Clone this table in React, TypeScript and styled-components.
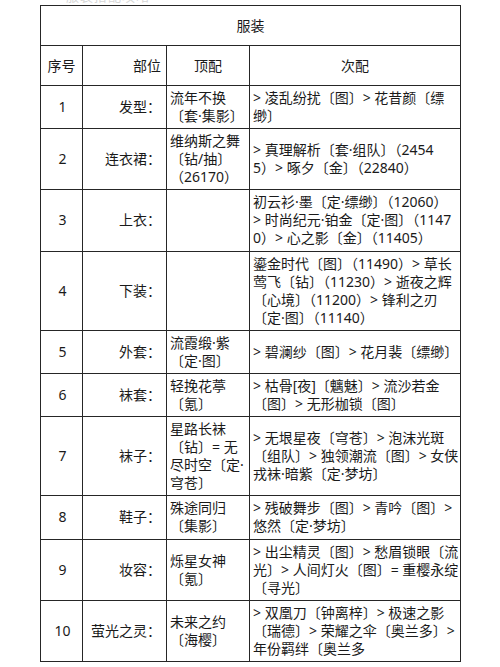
import React from "react";
import styled, { createGlobalStyle } from "styled-components";

const Global = createGlobalStyle`
  html, body { margin: 0; padding: 0; background: #ffffff; }
  body { font-family: "Noto Sans", "Noto Sans CJK SC", sans-serif; color: #1a1a1a; }
`;

const Page = styled.div`
  width: 500px;
  height: 667px;
  overflow: hidden;
  background: #fff;
`;

const TopStrip = styled.div`
  height: 5px;
  overflow: hidden;
  padding-left: 66px;
`;

const Faint = styled.div`
  margin-top: -11px;
  font-size: 13px;
  line-height: 14px;
  color: #d6d6d6;
  letter-spacing: 1px;
`;

const Table = styled.table`
  margin-left: 40px;
  border-collapse: collapse;
  table-layout: fixed;
  width: 420px;
  font-size: 14px;
  line-height: 18px;
  color: #1a1a1a;
`;

const TitleCell = styled.th`
  height: 39px;
  border: 1.6px solid #262626;
  font-weight: 400;
  text-align: center;
  vertical-align: middle;
  padding: 0;
`;

const HeadCell = styled.th<{ $align?: string }>`
  height: 39px;
  border: 1.6px solid #262626;
  font-weight: 400;
  text-align: ${(p) => p.$align || "center"};
  padding: 0 ${(p) => (p.$align === "right" ? "5px" : "3px")} 0 3px;
  vertical-align: middle;
`;

const Cell = styled.td<{ $align?: string }>`
  border: 1.6px solid #262626;
  text-align: ${(p) => p.$align || "left"};
  padding: 3px ${(p) => (p.$align === "right" ? "5px" : "1px")} 3.2px 3px;
  vertical-align: middle;
  white-space: nowrap;
  overflow: hidden;
`;

const Line = styled.div`
  height: 18px;
`;

type Row = { no: string; part: string; top: string[]; sub: string[] };

const rows: Row[] = [
  { no: "1", part: "发型：", top: ["流年不换", "〔套·集影〕"], sub: ["> 凌乱纷扰〔图〕> 花昔颜〔缥", "缈〕"] },
  { no: "2", part: "连衣裙：", top: ["维纳斯之舞", "〔钻/抽〕", "（26170）"], sub: ["> 真理解析〔套·组队〕（2454", "5）> 啄夕〔金〕（22840）"] },
  { no: "3", part: "上衣：", top: [], sub: ["初云衫·墨〔定·缥缈〕（12060）", "> 时尚纪元·铂金〔定·图〕（1147", "0）> 心之影〔金〕（11405）"] },
  { no: "4", part: "下装：", top: [], sub: ["鎏金时代〔图〕（11490）> 草长", "莺飞〔钻〕（11230）> 逝夜之辉", "〔心境〕（11200）> 锋利之刃", "〔定·图〕（11140）"] },
  { no: "5", part: "外套：", top: ["流霞缎·紫", "〔定·图〕"], sub: ["> 碧澜纱〔图〕> 花月裴〔缥缈〕"] },
  { no: "6", part: "袜套：", top: ["轻挽花葶", "〔氪〕"], sub: ["> 枯骨[夜]〔魑魅〕> 流沙若金", "〔图〕> 无形枷锁〔图〕"] },
  { no: "7", part: "袜子：", top: ["星路长袜", "〔钻〕= 无", "尽时空〔定·", "穹苍〕"], sub: ["> 无垠星夜〔穹苍〕> 泡沫光斑", "〔组队〕> 独领潮流〔图〕> 女侠", "戎袜·暗紫〔定·梦坊〕"] },
  { no: "8", part: "鞋子：", top: ["殊途同归", "〔集影〕"], sub: ["> 残破舞步〔图〕> 青吟〔图〕>", "悠然〔定·梦坊〕"] },
  { no: "9", part: "妆容：", top: ["烁星女神", "〔氪〕"], sub: ["> 出尘精灵〔图〕> 愁眉锁眼〔流", "光〕> 人间灯火〔图〕= 重樱永绽", "〔寻光〕"] },
  { no: "10", part: "萤光之灵：", top: ["未来之约", "〔海樱〕"], sub: ["> 双凰刀〔钟离梓〕> 极速之影", "〔瑞德〕> 荣耀之伞〔奥兰多〕>", "年份羁绊〔奥兰多"] },
];

const Lines = ({ items }: { items: string[] }) => (
  <>
    {items.length === 0 ? <Line /> : items.map((t, i) => <Line key={i}>{t}</Line>)}
  </>
);

export default function App() {
  return (
    <Page>
      <Global />
      <TopStrip>
        <Faint>服装搭配攻略</Faint>
      </TopStrip>
      <Table>
        <colgroup>
          <col style={{ width: 42 }} />
          <col style={{ width: 84 }} />
          <col style={{ width: 83 }} />
          <col style={{ width: 211 }} />
        </colgroup>
        <thead>
          <tr>
            <TitleCell colSpan={4}>服装</TitleCell>
          </tr>
          <tr>
            <HeadCell>序号</HeadCell>
            <HeadCell $align="right">部位</HeadCell>
            <HeadCell>顶配</HeadCell>
            <HeadCell>次配</HeadCell>
          </tr>
        </thead>
        <tbody>
          {rows.map((r) => (
            <tr key={r.no}>
              <Cell $align="center">{r.no}</Cell>
              <Cell $align="right">{r.part}</Cell>
              <Cell>
                <Lines items={r.top} />
              </Cell>
              <Cell>
                <Lines items={r.sub} />
              </Cell>
            </tr>
          ))}
        </tbody>
      </Table>
    </Page>
  );
}
